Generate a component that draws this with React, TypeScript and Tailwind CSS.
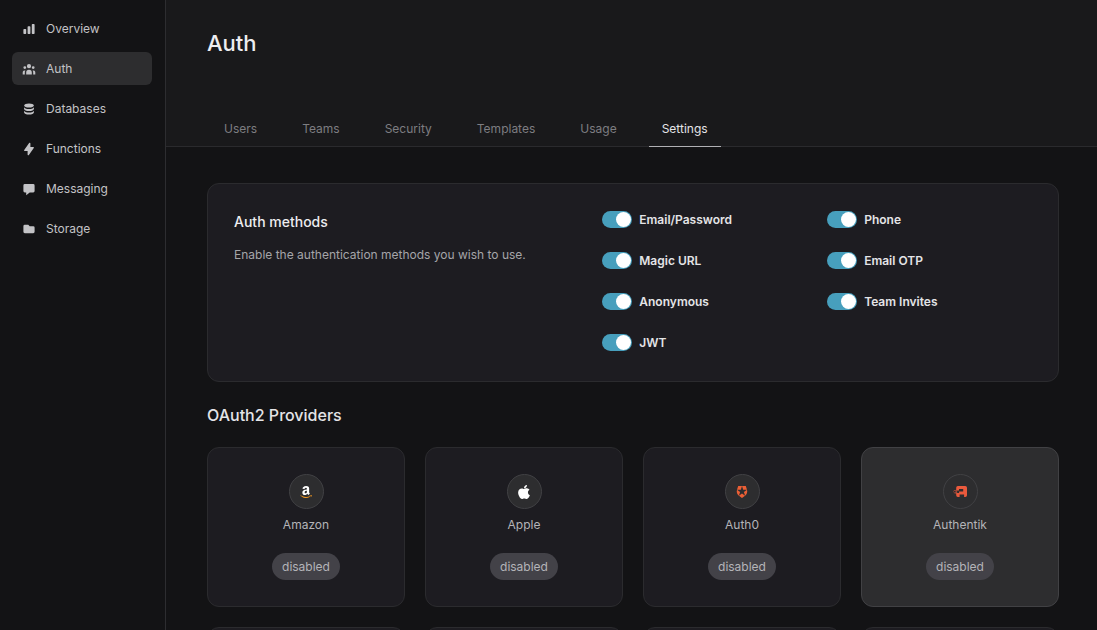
import type { ReactNode } from "react";
import { FaApple } from "react-icons/fa";
import {
  HiChartBar,
  HiDatabase,
  HiFolder,
  HiLightningBolt,
  HiUserGroup,
} from "react-icons/hi";

function ChatIcon() {
  return (
    <svg viewBox="0 0 20 20" fill="currentColor" className="size-3.5" aria-hidden="true">
      <path d="M18 5v8a2 2 0 0 1-2 2h-5l-5 4v-4H4a2 2 0 0 1-2-2V5a2 2 0 0 1 2-2h12a2 2 0 0 1 2 2z" />
    </svg>
  );
}

function AmazonLogo() {
  return (
    <svg viewBox="0 0 448 512" className="h-3.5 w-3" aria-hidden="true">
      <path
        fill="#ffffff"
        d="M257.2 162.7c-48.7 1.8-169.5 15.5-169.5 117.5 0 109.5 138.3 114 183.5 43.2 6.5 10.2 35.4 37.5 45.3 46.8l56.8-56S341 288.9 341 261.4V114.3C341 89 316.5 32 228.7 32 140.7 32 94 87 94 136.3l73.5 6.8c16.3-49.5 54.2-49.5 54.2-49.5 40.7-.1 35.5 29.8 35.5 69.1zm0 86.8c0 80-84.2 68-84.2 17.2 0-47.2 50.5-56.7 84.2-57.8v40.6z"
      />
      <path
        fill="#f79a1e"
        d="M393.2 413c-7.7 10-70 67-174.5 67S34.2 408.5 9.7 379c-6.8-7.7 1-11.3 5.5-8.3C88.5 415.2 203 488.5 387.7 401c7.5-3.7 13.3 2 5.5 12zm39.8 2.2c-6.5 15.8-16 26.8-21.2 31-5.5 4.5-9.5 2.7-6.5-3.8s19.3-46.5 12.7-55c-6.5-8.3-37-4.3-48-3.2-10.8 1-13 2-14-.3-2.3-5.7 21.7-15.5 37.5-17.5 15.7-1.8 41-.8 46 5.7 3.7 5.1 0 27.1-6.5 43.1z"
      />
    </svg>
  );
}

function Auth0Logo() {
  return (
    <svg viewBox="0 0 24 24" fill="#eb5f35" className="size-3.5 p-px" aria-hidden="true">
      <path d="M21.98 7.448L19.62 0H4.347L2.02 7.448c-1.352 4.312.03 9.206 3.815 12.015L12.007 24l6.157-4.552c3.755-2.81 5.182-7.688 3.815-12.015l-6.16 4.58 2.343 7.45-6.157-4.597-6.158 4.58 2.358-7.433-6.188-4.55 7.63-.045L12.008 0l2.356 7.404 7.615.044z" />
    </svg>
  );
}

function AuthentikLogo() {
  return (
    <svg viewBox="0 0 14 11" fill="#ea5a3d" className="h-[11px] w-3.5" aria-hidden="true">
      <path d="M4.9 0h7.4A1.7 1.7 0 0 1 14 1.7v7.6a1.7 1.7 0 0 1-1.7 1.7h-1.2V8.5H6.6V11H4.9a1.7 1.7 0 0 1-1.7-1.7V6.9h2.9V5.6h4.1V3.1H6v1.4H3.2V1.7A1.7 1.7 0 0 1 4.9 0z" />
      <path
        fillRule="evenodd"
        d="M1.8 3.9c.6 0 1.1.2 1.4.6h1v.9h-.7a1.8 1.8 0 0 1 0 .9h.7v.9h-1a1.8 1.8 0 1 1-1.4-3.3zm0 .9a.9.9 0 1 0 0 1.8.9.9 0 0 0 0-1.8z"
        opacity=".75"
      />
    </svg>
  );
}

const navItems: { label: string; icon: ReactNode; active?: boolean }[] = [
  { label: "Overview", icon: <HiChartBar className="size-3.5" /> },
  { label: "Auth", icon: <HiUserGroup className="size-3.5" />, active: true },
  { label: "Databases", icon: <HiDatabase className="size-3.5" /> },
  { label: "Functions", icon: <HiLightningBolt className="size-3.5" /> },
  { label: "Messaging", icon: <ChatIcon /> },
  { label: "Storage", icon: <HiFolder className="size-3.5" /> },
];

const tabs = ["Users", "Teams", "Security", "Templates", "Usage", "Settings"];

const methods = [
  "Email/Password",
  "Phone",
  "Magic URL",
  "Email OTP",
  "Anonymous",
  "Team Invites",
  "JWT",
];

const providers: { name: string; logo: ReactNode; highlighted?: boolean }[] = [
  { name: "Amazon", logo: <AmazonLogo /> },
  { name: "Apple", logo: <FaApple className="size-4 text-white" /> },
  { name: "Auth0", logo: <Auth0Logo /> },
  { name: "Authentik", logo: <AuthentikLogo />, highlighted: true },
];

function Sidebar() {
  return (
    <aside className="w-[166px] shrink-0 border-r border-[#2d2d30] py-3 pr-[13px] pl-3">
      <nav className="flex flex-col gap-[7px]">
        {navItems.map((item) => (
          <a
            key={item.label}
            href="#"
            aria-current={item.active ? "page" : undefined}
            className={`flex h-[33px] items-center gap-2.5 rounded-md px-2.5 text-xs text-[#c3c3c6] ${
              item.active ? "bg-[#2d2d2f]" : ""
            }`}
          >
            {item.icon}
            {item.label}
          </a>
        ))}
      </nav>
    </aside>
  );
}

function Toggle({ label }: { label: string }) {
  return (
    <label className="flex h-[17px] items-center gap-[7px] text-xs font-semibold text-[#e4e4e7]">
      <input
        type="checkbox"
        defaultChecked
        className="flex h-[17px] w-[30px] appearance-none items-center rounded-full bg-[#58585c] px-px before:size-[15px] before:rounded-full before:bg-white checked:justify-end checked:bg-[#479fbd]"
      />
      {label}
    </label>
  );
}

export default function App() {
  return (
    <div className="flex h-screen overflow-hidden bg-[#131315] font-['Inter',sans-serif] text-[#e4e4e7]">
      <Sidebar />
      <div className="min-w-0 flex-1 overflow-y-auto [scrollbar-width:none]">
        <header className="flex h-[147px] flex-col justify-between border-b border-[#2a2a2d] bg-[#19191b] pr-[38px] pl-[41px]">
          <h1 className="pt-[27px] text-[22px] leading-8 font-medium text-[#ededf0]">Auth</h1>
          <nav className="-mb-px flex gap-[19px] pl-1">
            {tabs.map((tab) => (
              <a
                key={tab}
                href="#"
                aria-current={tab === "Settings" ? "page" : undefined}
                className={`flex h-9 items-center border-b px-[13px] text-xs ${
                  tab === "Settings"
                    ? "border-[#b0b0b4] text-[#e4e4e7]"
                    : "border-transparent text-[#7d7d81]"
                }`}
              >
                {tab}
              </a>
            ))}
          </nav>
        </header>

        <main className="pt-9 pr-[38px] pb-9 pl-[41px]">
          <section className="grid grid-cols-[6fr_7fr] rounded-xl border border-[#2b2b2e] bg-[#1d1c21] px-[26px] pt-[27px] pb-[30px]">
            <div>
              <h2 className="text-sm leading-[22px] font-medium text-[#ededf0]">Auth methods</h2>
              <p className="pt-3 text-xs leading-5 text-[#a5a5a9]">
                Enable the authentication methods you wish to use.
              </p>
            </div>
            <div className="grid grid-cols-2 gap-x-5 gap-y-6">
              {methods.map((method) => (
                <Toggle key={method} label={method} />
              ))}
            </div>
          </section>

          <h2 className="pt-[19px] text-base leading-7 font-medium text-[#e4e4e7]">OAuth2 Providers</h2>

          <div className="grid grid-cols-4 gap-5 pt-[18px]">
            {providers.map((provider) => (
              <button
                key={provider.name}
                type="button"
                className={`flex h-40 flex-col items-center rounded-xl border pt-[26px] ${
                  provider.highlighted
                    ? "border-[#414144] bg-[#2d2d2f]"
                    : "border-[#2b2b2e] bg-[#1d1c21]"
                }`}
              >
                <span className="flex size-[35px] items-center justify-center rounded-full border border-[#414144] bg-[#2d2d2f]">
                  {provider.logo}
                </span>
                <span className="pt-1.5 text-xs leading-5 text-[#b4b4b8]">{provider.name}</span>
                <span className="mt-[18px] flex h-[27px] items-center rounded-full bg-[#434248] px-2.5 text-xs text-[#b4b4b8]">
                  disabled
                </span>
              </button>
            ))}
            {[0, 1, 2, 3].map((slot) => (
              <div key={slot} className="h-40 rounded-xl border border-[#2b2b2e] bg-[#1d1c21]" />
            ))}
          </div>
        </main>
      </div>
    </div>
  );
}
